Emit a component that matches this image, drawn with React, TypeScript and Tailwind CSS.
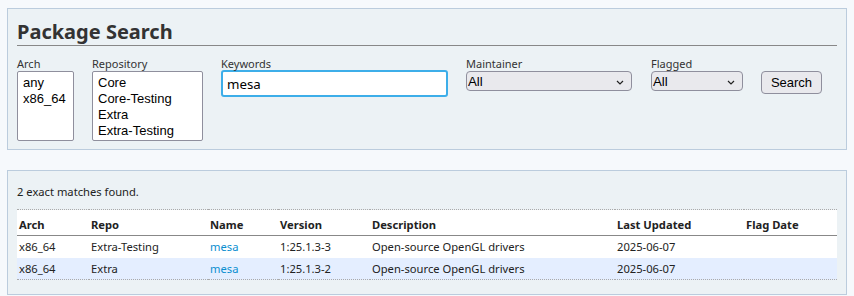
export default function App() {
  const rows = [
    { arch: "x86_64", repo: "Extra-Testing", name: "mesa", version: "1:25.1.3-3", desc: "Open-source OpenGL drivers", updated: "2025-06-07", flag: "" },
    { arch: "x86_64", repo: "Extra", name: "mesa", version: "1:25.1.3-2", desc: "Open-source OpenGL drivers", updated: "2025-06-07", flag: "" },
  ];

  const chevron = (
    <svg width="8" height="5" viewBox="0 0 8 5" className="absolute right-[7px] top-[8px]">
      <path d="M1 1 L4 4 L7 1" fill="none" stroke="#222" strokeWidth="1.2" />
    </svg>
  );

  return (
    <div className="min-h-screen bg-[#f6f9fc] px-[7px] pt-[8px] text-[#222] font-['Noto_Sans',sans-serif]">
      {/* Search box */}
      <div className="border border-[#bbccdd] bg-[#ecf2f5] px-[9px] pt-[10px] pb-[8px]">
        <h2 className="border-b border-[#888] pb-[1px] text-[20px] leading-[25px] font-bold text-[#333]">
          Package Search
        </h2>
        <div className="mt-[10px] flex items-start gap-[18px] text-[11px] leading-[15px]">
          <div className="w-[57px]">
            <div className="text-[#333]">Arch</div>
            <div className="h-[70px] w-[57px] rounded-[2px] border border-[#8f8f9d] bg-white px-[5px] pt-[3px] font-['Liberation_Sans',sans-serif] text-[13px] leading-[16px] text-black">
              <div>any</div>
              <div>x86_64</div>
            </div>
          </div>
          <div className="w-[111px]">
            <div className="text-[#333]">Repository</div>
            <div className="h-[70px] w-[111px] rounded-[2px] border border-[#8f8f9d] bg-white px-[5px] pt-[3px] font-['Liberation_Sans',sans-serif] text-[13px] leading-[16px] text-black">
              <div>Core</div>
              <div>Core-Testing</div>
              <div>Extra</div>
              <div>Extra-Testing</div>
            </div>
          </div>
          <div className="w-[227px]">
            <div className="text-[#333]">Keywords</div>
            <div className="mt-[-1px] flex h-[27px] w-[227px] items-center rounded-[3px] border-2 border-[#3daee9] bg-white px-[4px] pt-[2px] text-[13.3px] text-black">
              mesa
            </div>
          </div>
          <div className="w-[167px]">
            <div className="text-[#333]">Maintainer</div>
            <div className="relative h-[20px] w-[166px] rounded-[4px] border border-[#8f8f9d] bg-[#e9e9ed] pl-[1px] font-['Liberation_Sans',sans-serif] text-[13.3px] leading-[20px] text-black">
              All
              {chevron}
            </div>
          </div>
          <div className="w-[92px]">
            <div className="text-[#333]">Flagged</div>
            <div className="relative h-[20px] w-[92px] rounded-[4px] border border-[#8f8f9d] bg-[#e9e9ed] pl-[1px] font-['Liberation_Sans',sans-serif] text-[13.3px] leading-[20px] text-black">
              All
              {chevron}
            </div>
          </div>
          <div className="pt-[15px]">
            <button className="h-[23px] w-[61px] rounded-[4px] border border-[#8f8f9d] bg-[#e9e9ed] font-['Liberation_Sans',sans-serif] text-[13px] text-black">
              Search
            </button>
          </div>
        </div>
      </div>

      {/* Results box */}
      <div className="mt-[20px] border border-[#bbccdd] bg-[#ecf2f5] px-[9px] pt-[13px] pb-[14px] text-[11.2px]">
        <p className="leading-[15px]">2 exact matches found.</p>
        <table className="mt-[10px] w-full table-fixed border-collapse border-y border-dotted border-y-[#aaa] text-left leading-[15px]">
          <colgroup>
            <col className="w-[72px]" />
            <col className="w-[119px]" />
            <col className="w-[70px]" />
            <col className="w-[92px]" />
            <col className="w-[245px]" />
            <col className="w-[129px]" />
            <col />
          </colgroup>
          <thead>
            <tr className="h-[26px] border-b border-[#888] bg-white font-bold">
              <th className="px-[2px] pt-[7px] align-top">Arch</th>
              <th className="px-[2px] pt-[7px] align-top">Repo</th>
              <th className="px-[2px] pt-[7px] align-top">Name</th>
              <th className="px-[2px] pt-[7px] align-top">Version</th>
              <th className="px-[2px] pt-[7px] align-top">Description</th>
              <th className="px-[2px] pt-[7px] align-top">Last Updated</th>
              <th className="px-[2px] pt-[7px] align-top">Flag Date</th>
            </tr>
          </thead>
          <tbody>
            {rows.map((r, i) => (
              <tr key={i} className={`h-[22px] ${i % 2 === 1 ? "bg-[#e4eeff]" : "bg-white"}`}>
                <td className="px-[2px] pt-[3px] align-top">{r.arch}</td>
                <td className="px-[2px] pt-[3px] align-top">{r.repo}</td>
                <td className="px-[2px] pt-[3px] align-top">
                  <a className="text-[#0a8ed0]">{r.name}</a>
                </td>
                <td className="px-[2px] pt-[3px] align-top">{r.version}</td>
                <td className="px-[2px] pt-[3px] align-top">{r.desc}</td>
                <td className="px-[2px] pt-[3px] align-top">{r.updated}</td>
                <td className="px-[2px] pt-[3px] align-top">{r.flag}</td>
              </tr>
            ))}
          </tbody>
        </table>
      </div>
    </div>
  );
}
